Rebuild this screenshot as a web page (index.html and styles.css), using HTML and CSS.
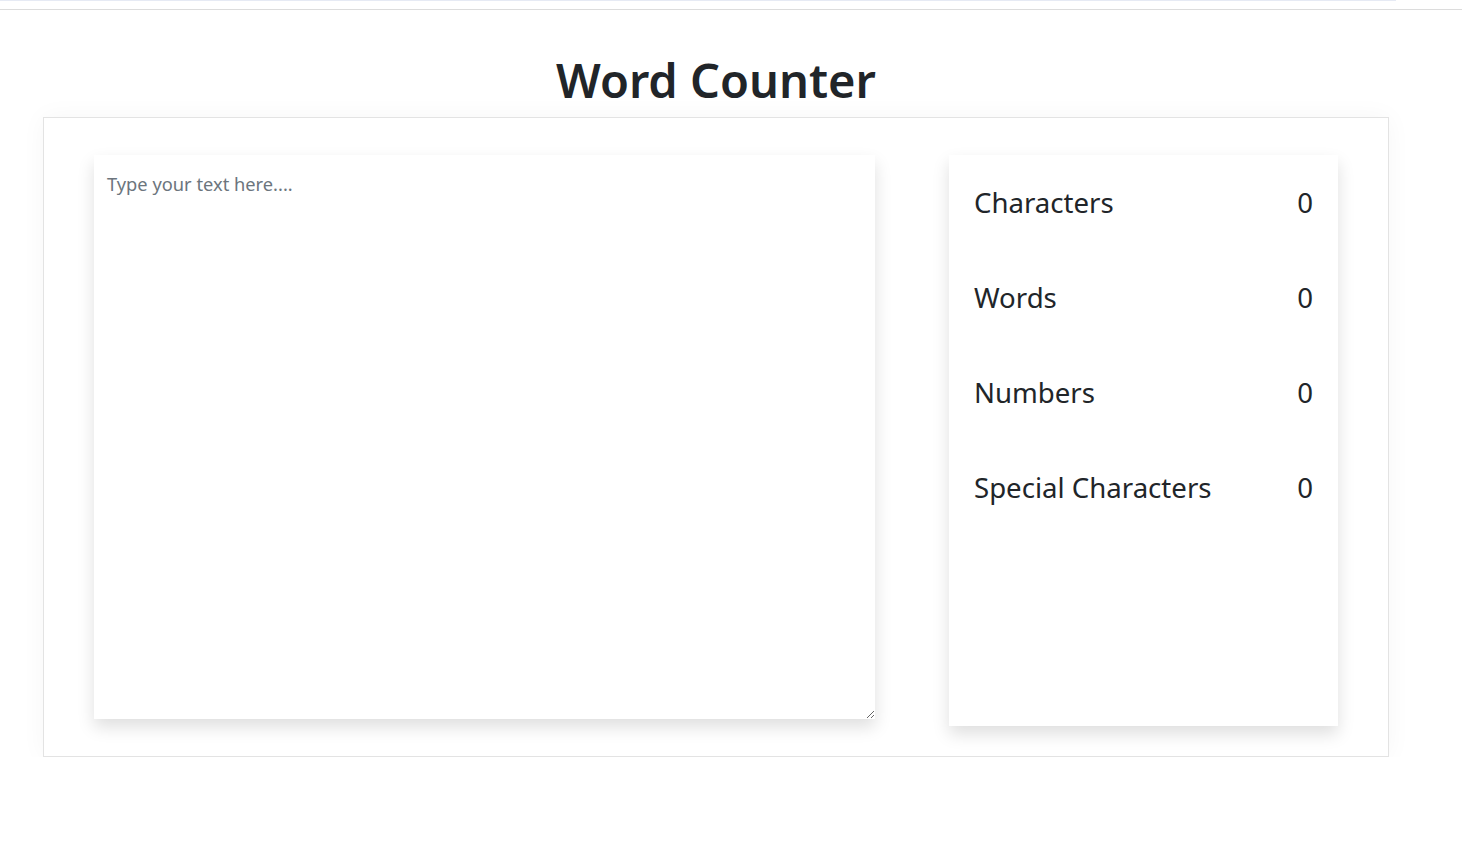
FILE: index.html
```html
<!DOCTYPE html>
<html lang="en">
<head>
<meta charset="utf-8">
<title>Word Counter</title>
<link rel="stylesheet" href="styles.css">
</head>
<body>
<div class="topstrip"></div>
<div class="rule"></div>
<div class="wrap">
  <h1 class="title">Word Counter</h1>
  <div class="panel">
    <textarea class="input" placeholder="Type your text here...."></textarea>
    <div class="stats">
      <div class="stat"><span>Characters</span><span>0</span></div>
      <div class="stat"><span>Words</span><span>0</span></div>
      <div class="stat"><span>Numbers</span><span>0</span></div>
      <div class="stat"><span>Special Characters</span><span>0</span></div>
    </div>
  </div>
</div>
</body>
</html>
```
FILE: styles.css
```css
* { box-sizing: border-box; }
html, body { margin: 0; padding: 0; background: #fff; }
body {
  font-family: "Noto Sans", "Open Sans", sans-serif;
  color: #212529;
}
.topstrip {
  width: 1396px;
  height: 1px;
  background: #e6eaf4;
}
.rule {
  margin-top: 8px;
  height: 1px;
  background: #dcdcdc;
}
.wrap {
  margin-left: 43px;
  width: 1346px;
}
.title {
  margin: 40px 0 0;
  text-align: center;
  font-size: 47px;
  font-weight: 600;
  line-height: 60px;
  color: #212529;
  height: 67px;
}
.panel {
  width: 1346px;
  height: 640px;
  border: 1px solid #e3e3e3;
  box-shadow: 0 0 24px rgba(0,0,0,0.04);
  padding: 37px 50px 0 50px;
  display: flex;
  align-items: flex-start;
  justify-content: space-between;
}
.input {
  width: 781px;
  height: 564px;
  border: none;
  outline: none;
  padding: 16px 13px;
  font-family: inherit;
  font-size: 18.3px;
  color: #212529;
  box-shadow: 0 8px 16px rgba(0,0,0,0.13);
  resize: both;
}
.input::placeholder { color: #6c757d; }
.stats {
  width: 389px;
  height: 571px;
  box-shadow: 0 8px 16px rgba(0,0,0,0.13);
  padding: 28px 25px 0 25px;
  display: flex;
  flex-direction: column;
  gap: 57px;
}
.stat {
  display: flex;
  justify-content: space-between;
  font-size: 27.6px;
  line-height: 38px;
}
```
